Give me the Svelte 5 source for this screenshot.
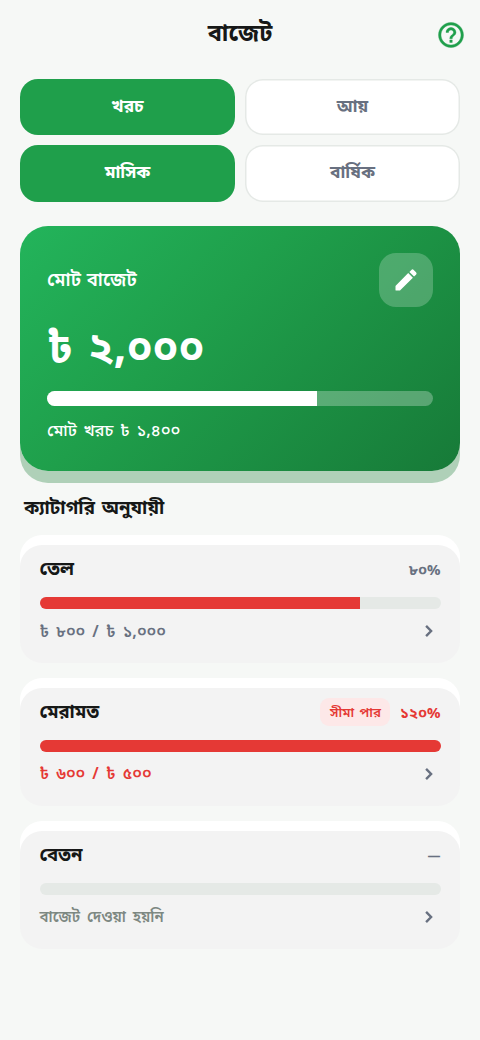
<script lang="ts">
	type Category = {
		name: string;
		percent: string;
		fill: number;
		detail: string;
		state: 'normal' | 'over' | 'empty';
	};

	let kind = $state('খরচ');
	let period = $state('মাসিক');

	const kinds = ['খরচ', 'আয়'];
	const periods = ['মাসিক', 'বার্ষিক'];

	const categories: Category[] = [
		{ name: 'তেল', percent: '৮০%', fill: 80, detail: '৳ ৮০০ / ৳ ১,০০০', state: 'normal' },
		{ name: 'মেরামত', percent: '১২০%', fill: 100, detail: '৳ ৬০০ / ৳ ৫০০', state: 'over' },
		{ name: 'বেতন', percent: '—', fill: 0, detail: 'বাজেট দেওয়া হয়নি', state: 'empty' }
	];
</script>

<main class="screen">
	<header>
		<span></span>
		<h1>বাজেট</h1>
		<button class="help" aria-label="সাহায্য">
			<svg viewBox="0 0 24 24" width="30" height="30" fill="currentColor">
				<path
					d="M11 18h2v-2h-2v2zm1-16C6.48 2 2 6.48 2 12s4.48 10 10 10 10-4.48 10-10S17.52 2 12 2zm0 18c-4.41 0-8-3.59-8-8s3.59-8 8-8 8 3.59 8 8-3.59 8-8 8zm0-14c-2.21 0-4 1.79-4 4h2c0-1.1.9-2 2-2s2 .9 2 2c0 2-3 1.75-3 5h2c0-2.25 3-2.5 3-5 0-2.21-1.79-4-4-4z"
				/>
			</svg>
		</button>
	</header>

	<div class="toggles">
		{#each kinds as item}
			<button class="toggle" class:active={kind === item} onclick={() => (kind = item)}>
				<span>{item}</span>
			</button>
		{/each}
		{#each periods as item}
			<button class="toggle" class:active={period === item} onclick={() => (period = item)}>
				<span>{item}</span>
			</button>
		{/each}
	</div>

	<section class="total">
		<div class="total-head">
			<span class="total-label">মোট বাজেট</span>
			<button class="edit" aria-label="সম্পাদনা">
				<svg viewBox="0 0 24 24" width="28" height="28" fill="currentColor">
					<path
						d="M3 17.3v3.2c0 .28.22.5.5.5h3.2c.13 0 .26-.05.35-.15L17.9 10.1l-4-4L3.15 16.95c-.1.1-.15.22-.15.35zM20.6 7.4a1.4 1.4 0 0 0 0-2L18.6 3.4a1.4 1.4 0 0 0-2 0l-1.7 1.7 4 4 1.7-1.7z"
					/>
				</svg>
			</button>
		</div>
		<div class="amount">৳ ২,০০০</div>
		<div class="total-track">
			<div class="total-fill" style="width: 70%"></div>
		</div>
		<p class="spent">মোট খরচ ৳ ১,৪০০</p>
	</section>

	<h2>ক্যাটাগরি অনুযায়ী</h2>

	<div class="categories">
		{#each categories as category}
			<article class="category {category.state}">
				<div class="category-head">
					<h3>{category.name}</h3>
					{#if category.state === 'over'}
						<span class="badge">সীমা পার</span>
					{/if}
					<span class="percent">{category.percent}</span>
				</div>
				<div class="track">
					<div class="fill" style="width: {category.fill}%"></div>
				</div>
				<div class="category-foot">
					<span class="detail">{category.detail}</span>
					<svg class="chevron" viewBox="0 0 24 24" width="24" height="24">
						<path d="m9.1 6.9 5 5.1-5 5.1" />
					</svg>
				</div>
			</article>
		{/each}
	</div>
</main>

<style>
	:global(body) {
		background: #f6f8f6;
	}

	.screen {
		box-sizing: border-box;
		width: 480px;
		height: 1040px;
		overflow: hidden;
		background: #f6f8f6;
		color: #161817;
		font-family: 'Noto Sans Bengali', 'Noto Sans', sans-serif;
	}

	h1,
	h2,
	h3,
	p {
		margin: 0;
	}

	button {
		padding: 0;
		border: 0;
		background: none;
		color: inherit;
		font: inherit;
	}

	svg {
		display: block;
		flex: none;
	}

	header {
		display: grid;
		grid-template-columns: 30px 1fr 30px;
		align-items: center;
		height: 69px;
		padding: 0 14.5px;
	}

	h1 {
		font-size: 23.5px;
		font-weight: 700;
		line-height: 36px;
		text-align: center;
	}

	.help {
		color: #1f9f4b;
	}

	.help svg {
		stroke: currentColor;
		stroke-width: 0.3;
	}

	.toggles {
		display: grid;
		grid-template-columns: 1fr 1fr;
		grid-auto-rows: 56.3px;
		gap: 10px;
		padding: 10px 20px 0;
	}

	.toggle {
		padding-top: 2px;
		border-radius: 18px;
		background: #fff;
		box-shadow: inset 0 0 0 1.5px #e5e9e6;
		color: #687080;
		font-size: 17.3px;
		font-weight: 700;
		line-height: 24px;
	}

	.toggle.active {
		background: #1f9f4b;
		box-shadow: none;
		color: #fff;
	}

	.total {
		box-sizing: border-box;
		height: 245px;
		margin: 24.4px 20px 0;
		padding: 27px;
		border-radius: 28px;
		background: linear-gradient(135deg, #23b45b 0%, #1f9f4b 40%, #177a38 100%);
		box-shadow: 0 12px 0 #afd0b8;
		color: #fff;
	}

	.total-head {
		display: flex;
		justify-content: space-between;
		height: 54px;
	}

	.total-label {
		font-size: 18.5px;
		font-weight: 600;
		line-height: 57px;
		word-spacing: 1px;
	}

	.edit {
		display: grid;
		place-items: center;
		width: 54px;
		height: 54px;
		border-radius: 17px;
		background: rgb(255 255 255 / 22%);
	}

	.amount {
		height: 84px;
		font-size: 42.5px;
		font-weight: 700;
		line-height: 88px;
		word-spacing: 4px;
	}

	.total-track {
		height: 15px;
		overflow: hidden;
		border-radius: 8px;
		background: rgb(255 255 255 / 28%);
	}

	.total-fill {
		height: 100%;
		background: #fff;
	}

	.spent {
		margin-top: 12px;
		font-size: 16.5px;
		font-weight: 500;
		line-height: 28px;
		word-spacing: 2.3px;
	}

	h2 {
		margin: 22px 24px 0;
		font-size: 18.7px;
		font-weight: 700;
		line-height: 33px;
		word-spacing: 2px;
	}

	.categories {
		display: grid;
		gap: 24.7px;
		padding: 19.3px 20px 0;
	}

	.category {
		box-sizing: border-box;
		height: 118px;
		padding: 7px 19.5px 0;
		border-radius: 22px;
		background: #f3f3f3;
		box-shadow: 0 -10px 0 #fff;
	}

	.category-head {
		display: flex;
		align-items: center;
		height: 34px;
	}

	h3 {
		flex: 1;
		padding-top: 4px;
		font-size: 18.5px;
		font-weight: 700;
		line-height: 32px;
	}

	.badge {
		box-sizing: border-box;
		width: 70px;
		height: 28px;
		margin-right: 9.5px;
		border-radius: 9px;
		background: #fde8e8;
		color: #e53935;
		font-size: 13.3px;
		font-weight: 600;
		line-height: 31px;
		text-align: center;
		word-spacing: 2px;
	}

	.percent {
		padding-top: 4px;
		color: #687080;
		font-size: 14.8px;
		font-weight: 700;
	}

	.track {
		height: 12px;
		margin-top: 11px;
		overflow: hidden;
		border-radius: 6px;
		background: #e5e9e6;
	}

	.fill {
		height: 100%;
		background: #e53935;
	}

	.category-foot {
		display: flex;
		align-items: center;
		justify-content: space-between;
		height: 24px;
		margin-top: 10px;
		color: #687080;
	}

	.chevron {
		fill: none;
		stroke: currentColor;
		stroke-width: 2.4;
	}

	.detail {
		padding-top: 3px;
		font-size: 16px;
		font-weight: 600;
		line-height: 24px;
		word-spacing: 3px;
	}

	.over .percent,
	.over .detail {
		color: #e53935;
	}

	.empty .percent {
		font-size: 13px;
	}

	.empty .detail {
		padding-top: 2px;
		color: #7d8882;
		font-size: 15px;
	}
</style>
